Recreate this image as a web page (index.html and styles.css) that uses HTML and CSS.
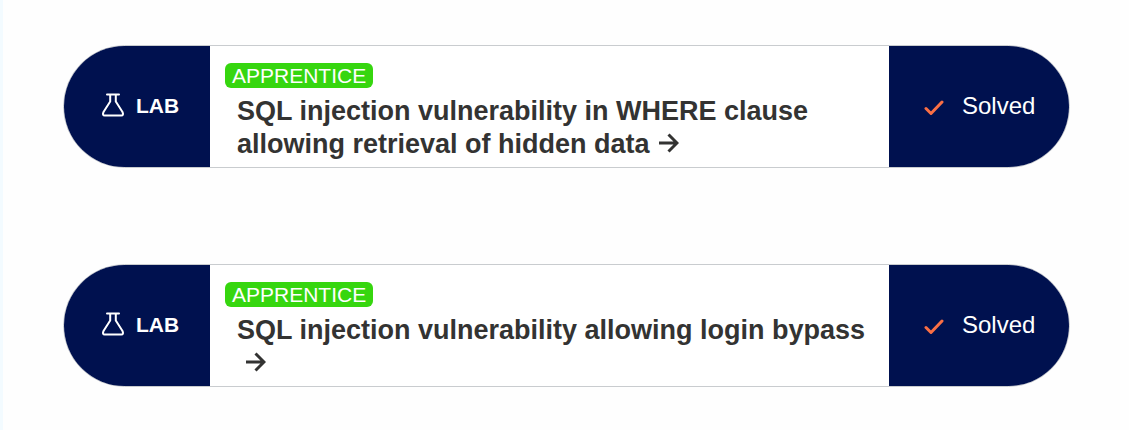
FILE: index.html
```html
<!DOCTYPE html>
<html lang="en">
<head>
<meta charset="utf-8">
<meta name="viewport" content="width=device-width, initial-scale=1">
<title>Labs</title>
<link rel="stylesheet" href="styles.css">
</head>
<body>
<main class="labs">
  <article class="lab">
    <div class="kind">
      <svg class="flask" viewBox="0 0 24 24" aria-hidden="true"><path d="M6 1.500h12M9.200 1.500v7L2.500 19q-1.500 3.500 1.300 3.500h16.400q2.800 0 1.300-3.500L14.800 8.500v-7"/></svg>
      <span>LAB</span>
    </div>
    <div class="info">
      <span class="level">APPRENTICE</span>
      <a class="title" href="#where-clause">SQL injection vulnerability in WHERE clause allowing retrieval of hidden data<svg class="arrow" viewBox="0 0 20 20" aria-hidden="true"><path d="M0 10h18M9.500 1.500L18 10l-8.500 8.500"/></svg></a>
    </div>
    <div class="status">
      <svg class="check" viewBox="0 0 20 16" aria-hidden="true"><path d="M2 8.500l5 5L18 2"/></svg>
      <span>Solved</span>
    </div>
  </article>
  <article class="lab">
    <div class="kind">
      <svg class="flask" viewBox="0 0 24 24" aria-hidden="true"><path d="M6 1.500h12M9.200 1.500v7L2.500 19q-1.500 3.500 1.300 3.500h16.400q2.800 0 1.300-3.500L14.800 8.500v-7"/></svg>
      <span>LAB</span>
    </div>
    <div class="info">
      <span class="level">APPRENTICE</span>
      <a class="title" href="#login-bypass">SQL injection vulnerability allowing login bypass<svg class="arrow" viewBox="0 0 20 20" aria-hidden="true"><path d="M0 10h18M9.500 1.500L18 10l-8.500 8.500"/></svg></a>
    </div>
    <div class="status">
      <svg class="check" viewBox="0 0 20 16" aria-hidden="true"><path d="M2 8.500l5 5L18 2"/></svg>
      <span>Solved</span>
    </div>
  </article>
</main>
</body>
</html>
```
FILE: styles.css
```css
* {
  box-sizing: border-box;
}

body {
  margin: 0;
  min-height: 100vh;
  border-left: 3px solid #f3fbff;
  background: #fefefe;
  color: #333332;
  font-family: "Liberation Sans", Arial, sans-serif;
}

.labs {
  display: flex;
  flex-direction: column;
  gap: 96px;
  padding: 45px 59px 43px 60px;
}

.lab {
  display: flex;
  border: 1px solid #c9cccf;
  border-radius: 62px;
  background: #fff;
  overflow: hidden;
}

.kind,
.status {
  display: flex;
  flex: none;
  align-items: center;
  padding-bottom: 2px;
  background: #00114f;
  color: #fff;
}

.kind {
  gap: 11px;
  width: 146px;
  padding-left: 37px;
  font-size: 21px;
  font-weight: bold;
}

.status {
  gap: 18px;
  width: 180px;
  padding-left: 35px;
  font-size: 24px;
}

.info {
  display: flex;
  flex: 1;
  flex-direction: column;
  align-items: flex-start;
  gap: 7px;
  min-width: 0;
  padding: 17px 15px 6px;
}

.level {
  padding: 0 7px;
  border-radius: 6px;
  background: #36d60f;
  color: #fff;
  font-size: 21px;
  line-height: 25px;
}

.title {
  padding-left: 12px;
  color: inherit;
  font-size: 27px;
  font-weight: bold;
  line-height: 33px;
  text-decoration: none;
}

.flask,
.check,
.arrow {
  flex: none;
  fill: none;
  stroke: currentColor;
}

.flask {
  width: 24px;
  height: 24px;
  margin-bottom: 2px;
  stroke-width: 2;
  stroke-linecap: round;
  stroke-linejoin: round;
}

.check {
  width: 20px;
  height: 16px;
  margin-top: 4px;
  color: #f96f45;
  stroke-width: 3;
  stroke-linecap: round;
  stroke-linejoin: round;
}

.arrow {
  width: 20px;
  height: 20px;
  margin-left: 9px;
  stroke-width: 3;
}
```
